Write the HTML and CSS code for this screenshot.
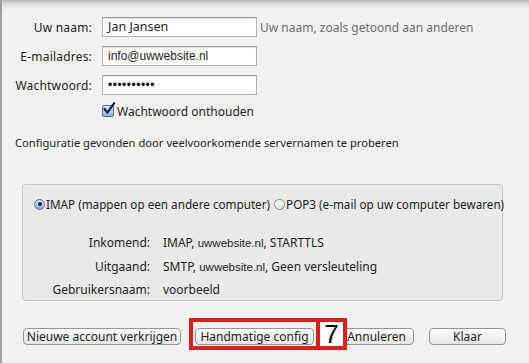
FILE: index.html
```html
<!DOCTYPE html>
<html lang="nl">
<head>
<meta charset="utf-8">
<title>Account instellen</title>
<link rel="stylesheet" href="styles.css">
</head>
<body>
<div class="window">
  <div class="form">
    <label class="lbl">Uw naam:</label>
    <div class="field lucida">Jan Jansen</div>
    <div class="hint">Uw naam, zoals getoond aan anderen</div>

    <label class="lbl">E-mailadres:</label>
    <div class="field helv">info@uwwebsite.nl</div>
    <div></div>

    <label class="lbl">Wachtwoord:</label>
    <div class="field dots">••••••••••</div>
    <div></div>

    <div></div>
    <div class="check-row">
      <span class="checkbox"><svg width="14" height="14" viewBox="0 0 14 14"><path d="M2.5 7 L5.4 10.6 L12.2 1.2" fill="none" stroke="#14233e" stroke-width="2.2" stroke-linecap="round" stroke-linejoin="round"/></svg></span>
      <span>Wachtwoord onthouden</span>
    </div>
    <div></div>
  </div>

  <p class="found">Configuratie gevonden door veelvoorkomende servernamen te proberen</p>

  <div class="group">
    <div class="radios">
      <span class="radio-item"><span class="radio on"></span>IMAP (mappen op een andere computer)</span>
      <span class="radio-item"><span class="radio"></span>POP3 (e-mail op uw computer bewaren)</span>
    </div>
    <div class="details">
      <span class="dl">Inkomend:</span><span class="dv">IMAP, <span class="helv">uwwebsite.nl</span>, STARTTLS</span>
      <span class="dl">Uitgaand:</span><span class="dv">SMTP, <span class="helv">uwwebsite.nl</span>, Geen versleuteling</span>
      <span class="dl">Gebruikersnaam:</span><span class="dv">voorbeeld</span>
    </div>
  </div>

  <div class="buttons">
    <button class="btn b-new">Nieuwe account verkrijgen</button>
    <button class="btn b-manual">Handmatige config</button>
    <button class="btn b-cancel">Annuleren</button>
    <button class="btn b-done">Klaar</button>
  </div>

  <div class="mark"></div>
  <div class="badge">7</div>
</div>
</body>
</html>
```

FILE: styles.css
```css
html, body {
  margin: 0;
  padding: 0;
}
body {
  width: 529px;
  height: 363px;
  overflow: hidden;
  font-family: "Noto Sans", "DejaVu Sans", sans-serif;
  font-size: 12px;
  color: #1e1e1e;
}
.window {
  position: relative;
  width: 529px;
  height: 363px;
  border-left: 2px solid #9c9c9c;
  background: linear-gradient(#b9b9b9 0px, #dcdcdc 4px, #efefef 9px, #f1f1f1 12px);
  box-sizing: border-box;
  padding-top: 17px;
}
.form {
  display: grid;
  grid-template-columns: 90px 155px auto;
  column-gap: 10px;
  row-gap: 9px;
  align-items: center;
}
.lbl {
  text-align: right;
  white-space: nowrap;
  letter-spacing: 0.2px;
}
.field {
  height: 20px;
  box-sizing: border-box;
  background: #fff;
  border: 1px solid #b4b4b4;
  border-top-color: #9a9a9a;
  box-shadow: inset 0 1px 1px rgba(0,0,0,0.12);
  padding-left: 5px;
  line-height: 18px;
  white-space: nowrap;
}
.lucida {
  font-family: "Noto Sans", sans-serif;
  font-size: 12.5px;
}
.helv {
  font-family: "Liberation Sans", Arial, sans-serif;
  font-size: 12px;
}
.dots {
  font-family: "Liberation Sans", sans-serif;
  font-size: 12px;
  letter-spacing: 0.5px;
  color: #000;
}
.hint {
  margin-left: -7px;
  color: #6e6e6e;
  white-space: nowrap;
}
.check-row {
  display: flex;
  align-items: center;
  gap: 3px;
  height: 16px;
  margin-top: -1px;
  white-space: nowrap;
}
.checkbox {
  flex-shrink: 0;
  width: 12px;
  height: 12px;
  box-sizing: border-box;
  border: 1px solid #4f6f9c;
  border-radius: 2px;
  background: linear-gradient(#d6e6f8, #8fb3e2);
  position: relative;
}
.checkbox svg {
  position: absolute;
  left: -1px;
  top: -4px;
}
.found {
  margin: 16px 0 0 13px;
  line-height: 16px;
  font-size: 11.2px;
}
.group {
  margin: 33px 0 0 20px;
  width: 481px;
  height: 117px;
  box-sizing: border-box;
  border: 1px solid #c6c6c6;
  border-radius: 4px;
  background: #e9e9e9;
  padding: 11px 0 0 10px;
}
.radios {
  display: flex;
  gap: 3px;
  white-space: nowrap;
  font-size: 11.7px;
}
.radio-item {
  display: flex;
  align-items: center;
  gap: 1px;
}
.radio {
  flex-shrink: 0;
  width: 11px;
  height: 11px;
  box-sizing: border-box;
  border-radius: 50%;
  border: 1px solid #8a8a8a;
  background: linear-gradient(#fff, #e2e2e2);
  position: relative;
  margin-left: 1px;
}
.radio.on {
  border-color: #5677a6;
  background: linear-gradient(#d4e4f7, #89afe2);
}
.radio.on::after {
  content: "";
  position: absolute;
  left: 2.5px;
  top: 2.5px;
  width: 4px;
  height: 4px;
  border-radius: 50%;
  background: #15233b;
}
.details {
  display: grid;
  grid-template-columns: 116px auto;
  column-gap: 13px;
  row-gap: 7px;
  margin-top: 23px;
  padding-left: 1px;
  line-height: 16.5px;
  white-space: nowrap;
}
.dl {
  text-align: right;
}
.details .helv {
  font-size: 11.5px;
}
.buttons {
  display: flex;
  align-items: center;
  margin: 27px 0 0 21px;
}
.btn {
  flex-shrink: 0;
  height: 17px;
  box-sizing: border-box;
  padding: 0;
  border: 1px solid #959595;
  border-radius: 4px;
  background: linear-gradient(#ffffff, #f0f0f0 50%, #e6e6e6);
  font-family: "Noto Sans", sans-serif;
  font-size: 12px;
  line-height: 15px;
  color: #1e1e1e;
  white-space: nowrap;
}
.b-new { width: 158px; }
.b-manual { width: 119px; margin-left: 14px; }
.b-cancel { width: 75px; margin-left: 25px; }
.b-done { width: 77px; margin-left: 15px; }
.mark {
  position: absolute;
  left: 187px;
  top: 318px;
  width: 131px;
  height: 32px;
  box-sizing: border-box;
  border: 4px solid #dc1e1e;
}
.badge {
  position: absolute;
  left: 314px;
  top: 318px;
  width: 31px;
  height: 32px;
  box-sizing: border-box;
  border: 4px solid #dc1e1e;
  background: #fff;
  font-family: "Liberation Sans", Arial, sans-serif;
  font-size: 26px;
  line-height: 24px;
  text-align: center;
  color: #000;
}
```
